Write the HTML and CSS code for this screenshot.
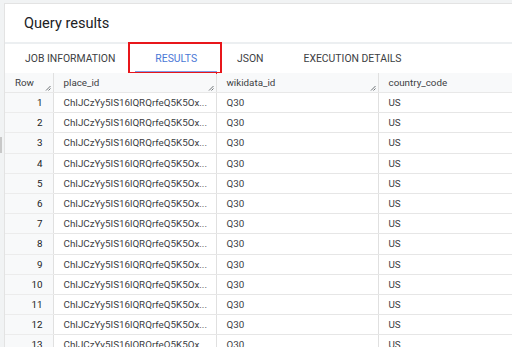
FILE: index.html
```html
<!DOCTYPE html>
<html>
<head>
<meta charset="utf-8">
<link rel="stylesheet" href="styles.css">
</head>
<body>
<div class="page">
  <div class="panel">
    <div class="title">Query results</div>
    <div class="sep"></div>
    <div class="tabs">
      <div class="tab">JOB INFORMATION</div>
      <div class="tab active">RESULTS</div>
      <div class="tab">JSON</div>
      <div class="tab">EXECUTION DETAILS</div>
      <div class="highlight"></div>
    </div>
    <table class="grid">
      <colgroup><col class="c-row"><col class="c-place"><col class="c-wiki"><col></colgroup>
      <thead>
        <tr>
          <th class="num-h">Row<svg class="grip" viewBox="0 0 6 6"><path d="M1 5.5L5.5 1M3.5 5.5L5.5 3.5" stroke="#5f6368" stroke-width="0.9"/></svg></th>
          <th>place_id<svg class="grip" viewBox="0 0 6 6"><path d="M1 5.5L5.5 1M3.5 5.5L5.5 3.5" stroke="#5f6368" stroke-width="0.9"/></svg></th>
          <th>wikidata_id<svg class="grip" viewBox="0 0 6 6"><path d="M1 5.5L5.5 1M3.5 5.5L5.5 3.5" stroke="#5f6368" stroke-width="0.9"/></svg></th>
          <th>country_code</th>
        </tr>
      </thead>
      <tbody>
        <tr><td class="num">1</td><td>ChIJCzYy5IS16lQRQrfeQ5K5Ox...</td><td>Q30</td><td>US</td></tr>
        <tr><td class="num">2</td><td>ChIJCzYy5IS16lQRQrfeQ5K5Ox...</td><td>Q30</td><td>US</td></tr>
        <tr><td class="num">3</td><td>ChIJCzYy5IS16lQRQrfeQ5K5Ox...</td><td>Q30</td><td>US</td></tr>
        <tr><td class="num">4</td><td>ChIJCzYy5IS16lQRQrfeQ5K5Ox...</td><td>Q30</td><td>US</td></tr>
        <tr><td class="num">5</td><td>ChIJCzYy5IS16lQRQrfeQ5K5Ox...</td><td>Q30</td><td>US</td></tr>
        <tr><td class="num">6</td><td>ChIJCzYy5IS16lQRQrfeQ5K5Ox...</td><td>Q30</td><td>US</td></tr>
        <tr><td class="num">7</td><td>ChIJCzYy5IS16lQRQrfeQ5K5Ox...</td><td>Q30</td><td>US</td></tr>
        <tr><td class="num">8</td><td>ChIJCzYy5IS16lQRQrfeQ5K5Ox...</td><td>Q30</td><td>US</td></tr>
        <tr><td class="num">9</td><td>ChIJCzYy5IS16lQRQrfeQ5K5Ox...</td><td>Q30</td><td>US</td></tr>
        <tr><td class="num">10</td><td>ChIJCzYy5IS16lQRQrfeQ5K5Ox...</td><td>Q30</td><td>US</td></tr>
        <tr><td class="num">11</td><td>ChIJCzYy5IS16lQRQrfeQ5K5Ox...</td><td>Q30</td><td>US</td></tr>
        <tr><td class="num">12</td><td>ChIJCzYy5IS16lQRQrfeQ5K5Ox...</td><td>Q30</td><td>US</td></tr>
        <tr><td class="num">13</td><td>ChIJCzYy5IS16lQRQrfeQ5K5Ox...</td><td>Q30</td><td>US</td></tr>
      </tbody>
    </table>
  </div>
  <div class="scroll-handle"></div>
</div>
</body>
</html>
```
FILE: styles.css
```css
html, body {
  margin: 0;
  padding: 0;
}
body {
  width: 512px;
  height: 347px;
  overflow: hidden;
  background: #f1f3f4;
  font-family: Roboto, "Liberation Sans", sans-serif;
  color: #3c4043;
}
.page {
  position: relative;
  padding: 3px 0 0 4px;
}
.panel {
  background: #fff;
  border-left: 1px solid #e3e3e3;
  border-top: 1px solid #e3e3e3;
}
.title {
  height: 38px;
  padding-left: 19px;
  display: flex;
  align-items: center;
  font-size: 14.6px;
  color: #202124;
}
.sep {
  height: 2px;
  background: #eceff1;
}
.tabs {
  position: relative;
  display: flex;
  height: 29px;
  font-size: 10.4px;
}
.tab {
  padding: 0 20px;
  display: flex;
  align-items: center;
  position: relative;
}
.tab.active {
  color: #4a78d6;
}
.tab.active::after {
  content: "";
  position: absolute;
  left: 0;
  right: 0;
  bottom: 0;
  height: 2px;
  background: #7f9de6;
}
.highlight {
  position: absolute;
  left: 123px;
  top: -2px;
  width: 90px;
  height: 28px;
  border: 2px solid #e8161b;
}
.grid {
  border-collapse: collapse;
  table-layout: fixed;
  width: 507px;
  font-size: 9.8px;
}
.c-row { width: 48px; }
.c-place { width: 163px; }
.c-wiki { width: 162px; }
.grid th {
  position: relative;
  background: #f8f9fa;
  font-weight: normal;
  text-align: left;
  height: 19px;
  padding: 0 0 0 10px;
  border-left: 1px solid #e0e0e0;
  border-bottom: 1px solid #e8e8e8;
  color: #3c4043;
}
.grid th.num-h {
  border-left: none;
  padding-left: 10px;
}
.grip {
  position: absolute;
  right: 2px;
  bottom: 1px;
  width: 6px;
  height: 6px;
}
.grid td {
  height: 19.2px;
  padding: 0 0 0 10px;
  border-left: 1px solid #e0e0e0;
  border-bottom: 1px solid #e6e6e6;
  white-space: nowrap;
  overflow: hidden;
}
.grid td.num {
  background: #f8f9fa;
  text-align: right;
  padding: 0 10px 0 0;
  border-left: none;
  border-bottom: 1px solid #ececec;
  color: #202124;
}
.scroll-handle {
  position: absolute;
  left: 0;
  top: 137px;
  width: 2px;
  height: 16px;
  background: #c8c8c8;
}
```
